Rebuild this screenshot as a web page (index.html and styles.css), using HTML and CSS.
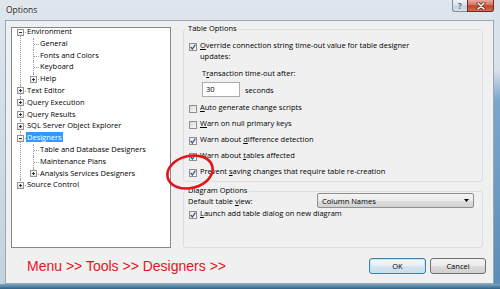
FILE: index.html
```html
<!DOCTYPE html>
<html lang="en">
<head>
  <meta charset="UTF-8" />
  <meta name="viewport" content="width=device-width, initial-scale=1.0" />
  <title>Options</title>
  <link rel="stylesheet" href="styles.css">
</head>
<body>
  <div class="window">
    <div class="titlebar">
      <span class="title">Options</span>
      <div class="caption-btns">
        <span class="cap-help">?</span>
        <span class="cap-close">
          <svg width="10" height="8" viewBox="0 0 10 8">
            <path d="M2 1 L8 7 M8 1 L2 7" stroke="#5a1d14" stroke-width="3" stroke-linecap="round" />
            <path d="M2 1 L8 7 M8 1 L2 7" stroke="#fff" stroke-width="1.6" stroke-linecap="round" />
          </svg>
        </span>
      </div>
    </div>

    <div class="client">
      <div class="main">
        <div class="tree">
          <ul class="tree-list">
            <li>
              <div class="row"><span class="exp minus"></span><span class="lbl">Environment</span></div>
              <ul>
                <li><div class="row"><span class="lbl">General</span></div></li>
                <li><div class="row"><span class="lbl">Fonts and Colors</span></div></li>
                <li><div class="row"><span class="lbl">Keyboard</span></div></li>
                <li><div class="row"><span class="exp"></span><span class="lbl">Help</span></div></li>
              </ul>
            </li>
            <li><div class="row"><span class="exp"></span><span class="lbl">Text Editor</span></div></li>
            <li><div class="row"><span class="exp"></span><span class="lbl">Query Execution</span></div></li>
            <li><div class="row"><span class="exp"></span><span class="lbl">Query Results</span></div></li>
            <li><div class="row"><span class="exp"></span><span class="lbl">SQL Server Object Explorer</span></div></li>
            <li>
              <div class="row"><span class="exp minus"></span><span class="lbl selected">Designers</span></div>
              <ul>
                <li><div class="row"><span class="lbl">Table and Database Designers</span></div></li>
                <li><div class="row"><span class="lbl">Maintenance Plans</span></div></li>
                <li><div class="row"><span class="exp"></span><span class="lbl">Analysis Services Designers</span></div></li>
              </ul>
            </li>
            <li><div class="row"><span class="exp"></span><span class="lbl">Source Control</span></div></li>
          </ul>
        </div>

        <div class="panel">
          <div class="group">
            <div class="group-title">Table Options</div>
            <div class="cbrow first">
              <span class="cb checked"><svg width="6" height="6" viewBox="0 0 6 6"><path d="M0.7 3 L2.4 5 L5.4 0.7" /></svg></span>
              <span><u>O</u>verride connection string time-out value for table designer<br>updates:</span>
            </div>
            <div class="tx-label">T<u>r</u>ansaction time-out after:</div>
            <div class="tx-row">
              <span class="tx-input">30</span>
              <span class="tx-unit">seconds</span>
            </div>
            <div class="cbrow">
              <span class="cb"></span>
              <span><u>A</u>uto generate change scripts</span>
            </div>
            <div class="cbrow">
              <span class="cb"></span>
              <span><u>W</u>arn on null primary keys</span>
            </div>
            <div class="cbrow">
              <span class="cb checked"><svg width="6" height="6" viewBox="0 0 6 6"><path d="M0.7 3 L2.4 5 L5.4 0.7" /></svg></span>
              <span>Warn about <u>d</u>ifference detection</span>
            </div>
            <div class="cbrow">
              <span class="cb checked"><svg width="6" height="6" viewBox="0 0 6 6"><path d="M0.7 3 L2.4 5 L5.4 0.7" /></svg></span>
              <span>Warn about <u>t</u>ables affected</span>
            </div>
            <div class="cbrow">
              <span class="cb checked"><svg width="6" height="6" viewBox="0 0 6 6"><path d="M0.7 3 L2.4 5 L5.4 0.7" /></svg></span>
              <span>Prevent <u>s</u>aving changes that require table re-creation</span>
            </div>
          </div>

          <div class="group grow">
            <div class="group-title">Diagram Options</div>
            <div class="view-row">
              <span>Default table <u>v</u>iew:</span>
              <div class="combo">
                <span>Column Names</span>
                <svg class="arrow" width="5" height="3" viewBox="0 0 5 3"><path d="M0 0 H5 L2.5 3 Z" /></svg>
              </div>
            </div>
            <div class="cbrow launch">
              <span class="cb checked"><svg width="6" height="6" viewBox="0 0 6 6"><path d="M0.7 3 L2.4 5 L5.4 0.7" /></svg></span>
              <span><u>L</u>aunch add table dialog on new diagram</span>
            </div>
          </div>
        </div>
      </div>

      <div class="footer">
        <span class="hint">Menu &gt;&gt; Tools &gt;&gt; Designers &gt;&gt;</span>
        <div class="buttons">
          <button class="btn default">OK</button>
          <button class="btn cancel">Cancel</button>
        </div>
      </div>
    </div>

    <!-- red marker drawn over the checkbox -->
    <svg class="marker" width="60" height="46" viewBox="0 0 60 46">
      <ellipse cx="28" cy="22" rx="23" ry="16" transform="rotate(-14 28 22)" />
    </svg>
  </div>
</body>
</html>
```

FILE: styles.css
```css
body {
  margin: 0;
  font-family: "Open Sans", "Noto Sans", sans-serif;
  font-size: 7.5px;
  color: #000;
  background: #fff;
}
.window {
  position: relative;
  width: 500px;
  height: 289px;
  box-sizing: border-box;
  padding: 0 6px 5px 5px;
  display: flex;
  flex-direction: column;
  overflow: hidden;
  background:
    linear-gradient(#7ea6c4, #2f6286) left bottom / 100% 5px no-repeat,
    linear-gradient(#d9e2ea 0, #d9e2ea 70px, #7aa6cc 100px, #5b8db8 100%) right top / 6px 100% no-repeat,
    linear-gradient(#dfe6ed, #d3dde6 40%, #c4d1dc 100%);
}
.titlebar {
  height: 20px;
  flex: none;
  display: flex;
  justify-content: space-between;
  align-items: flex-start;
}
.title {
  padding: 4px 0 0 1px;
  font-size: 8.5px;
  line-height: 11px;
  color: #1c1c1c;
  text-shadow: 0 0 3px #fff;
}
.caption-btns {
  display: flex;
}
.cap-help {
  width: 15px;
  height: 12px;
  box-sizing: border-box;
  border: 1px solid #7d8c9b;
  border-top: none;
  border-right: none;
  border-radius: 0 0 0 3px;
  background: linear-gradient(#eef3f7, #d6e0e9 50%, #c0cedb 51%, #d8e3ec);
  color: #56677a;
  font-size: 8px;
  font-weight: bold;
  line-height: 11px;
  text-align: center;
}
.cap-close {
  width: 27px;
  height: 12px;
  box-sizing: border-box;
  border: 1px solid #6b2a22;
  border-top: none;
  border-radius: 0 0 3px 0;
  background: linear-gradient(#e9a99b, #d77562 45%, #c2412a 52%, #d56c4e 100%);
  display: flex;
  align-items: center;
  justify-content: center;
}

.client {
  flex: 1;
  box-sizing: border-box;
  border: 1px solid #9aa8b6;
  background: #f0f0f0;
  padding: 6px 10px 0 5px;
  display: flex;
  flex-direction: column;
}
.main {
  display: flex;
  gap: 12px;
  height: 221px;
  flex: none;
}

/* tree */
.tree {
  width: 160px;
  box-sizing: border-box;
  border: 1px solid #828790;
  background: #fff;
  overflow: hidden;
}
.tree ul {
  list-style: none;
  margin: 0;
  padding: 0;
}
.tree ul ul {
  margin-left: 13px;
}
.tree-list {
  margin-top: -2px !important;
}
.tree li {
  position: relative;
}
.tree li::before {
  content: '';
  position: absolute;
  left: 8px;
  top: 0;
  bottom: 0;
  border-left: 1px dotted #a0a0a0;
}
.tree li:last-child::before {
  bottom: auto;
  height: 6px;
}
.tree-list > li:first-child::before {
  top: 6px;
}
.row {
  position: relative;
  height: 11.8px;
  line-height: 11.8px;
  padding-left: 14px;
  white-space: nowrap;
}
.row::before {
  content: '';
  position: absolute;
  left: 9px;
  top: 6px;
  width: 5px;
  border-top: 1px dotted #a0a0a0;
}
.exp {
  position: absolute;
  left: 5px;
  top: 2.5px;
  width: 7px;
  height: 7px;
  box-sizing: border-box;
  border: 1px solid #959595;
  background: linear-gradient(#fff, #e4e4e4);
  z-index: 1;
}
.exp::before,
.exp::after {
  content: '';
  position: absolute;
  background: #333;
}
.exp::before {
  left: 1px;
  top: 2px;
  width: 3px;
  height: 1px;
}
.exp::after {
  left: 2px;
  top: 1px;
  width: 1px;
  height: 3px;
}
.exp.minus::after {
  display: none;
}
.lbl {
  padding: 0 1px;
}
.lbl.selected {
  background: #3399ff;
  color: #fff;
}

/* right panel */
.panel {
  width: 300px;
  display: flex;
  flex-direction: column;
}
.group {
  border: 1px solid #d5dfe5;
  border-radius: 3px;
  padding: 0 6px 4px 5px;
  margin-top: 2px;
}
.group.grow {
  flex: 1;
  margin-top: 9px;
}
.group-title {
  width: fit-content;
  margin: -7px 0 0 -3px;
  padding: 0 2px;
  background: #f0f0f0;
  line-height: 11px;
}
.cbrow {
  display: flex;
  align-items: flex-start;
  line-height: 11px;
  margin-top: 5px;
}
.cbrow.first {
  margin-top: 6px;
}
.cbrow.launch {
  margin-top: 0;
}
.cb {
  flex: none;
  width: 8px;
  height: 8px;
  box-sizing: border-box;
  margin: 2.5px 3px 0 0;
  border: 1px solid #8f8f8f;
  background: linear-gradient(135deg, #d9d9d9, #f9f9f9);
  display: flex;
  align-items: center;
  justify-content: center;
}
.cb.checked {
  background: linear-gradient(135deg, #e6e6e6, #fdfdfd);
}
.cb path {
  fill: none;
  stroke: #3f5388;
  stroke-width: 1.3;
}
.tx-label {
  margin: 6px 0 0 13px;
  line-height: 11px;
}
.tx-row {
  display: flex;
  align-items: center;
  margin: 3px 0 0 13px;
}
.tx-input {
  width: 38px;
  height: 15px;
  box-sizing: border-box;
  border: 1px solid #abadb3;
  background: #fff;
  padding-left: 3px;
  line-height: 13px;
}
.tx-unit {
  margin-left: 5px;
}
.view-row {
  display: flex;
  align-items: center;
  height: 15px;
  margin: -3px 0 0 -1px;
}
.combo {
  margin-left: auto;
  margin-right: 2px;
  width: 157px;
  height: 15px;
  box-sizing: border-box;
  border: 1px solid #8e8f8f;
  border-radius: 2px;
  padding: 0 4px;
  background: linear-gradient(#f4f4f4, #ececec 50%, #dedede 50%, #d2d2d2);
  display: flex;
  align-items: center;
}
.combo .arrow {
  margin-left: auto;
  fill: #000;
}

/* footer */
.footer {
  flex: 1;
  display: flex;
  align-items: center;
  justify-content: space-between;
  padding-left: 16px;
  margin-right: -3px;
}
.hint {
  font-family: "Liberation Sans", Arial, sans-serif;
  font-size: 14px;
  color: #e3141b;
}
.buttons {
  display: flex;
  gap: 4px;
}
.btn {
  width: 57px;
  height: 16px;
  padding: 0;
  font-family: inherit;
  font-size: 7.5px;
  color: #000;
  border: 1px solid #707070;
  border-radius: 3px;
  background: linear-gradient(#f3f3f3, #ebebeb 50%, #dddddd 50%, #cfcfcf);
}
.btn.cancel {
  width: 56px;
}
.btn.default {
  border-color: #3c7fb1;
  box-shadow: inset 0 0 0 1px #c4e5f6;
  background: linear-gradient(#f1f7fb, #e6f0f7 50%, #d6e6f1 50%, #c8dcea);
}

.marker {
  position: absolute;
  left: 162px;
  top: 150px;
}
.marker ellipse {
  fill: none;
  stroke: #e1141a;
  stroke-width: 2.6;
}
```
